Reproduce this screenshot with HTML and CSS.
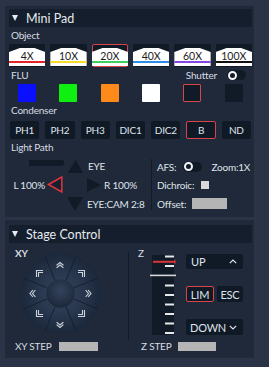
FILE: index.html
```html
<!DOCTYPE html>
<html>
<head>
<meta charset="utf-8">
<link rel="stylesheet" href="styles.css">
</head>
<body>
<div class="page">
  <section class="panel minipad">
    <div class="hdr"><span class="tri"></span><span>Mini Pad</span></div>
    <div class="lbl">Object</div>
    <div class="row6 objs">
      <div class="obj"><div class="lens"><span class="mag">4X</span><i class="bar c-red"></i></div></div>
      <div class="obj"><div class="lens"><span class="mag">10X</span><i class="bar c-yellow"></i></div></div>
      <div class="obj sel"><div class="lens"><span class="mag">20X</span><i class="bar c-green"></i></div></div>
      <div class="obj"><div class="lens"><span class="mag">40X</span><i class="bar c-blue"></i></div></div>
      <div class="obj"><div class="lens"><span class="mag">60X</span><i class="bar c-purple"></i></div></div>
      <div class="obj"><div class="lens"><span class="mag">100X</span><i class="bar c-black"></i></div></div>
    </div>
    <div class="lbl flurow"><span>FLU</span><span class="shutter">Shutter<span class="tog"><span class="knob"></span></span></span></div>
    <div class="row6 flus">
      <div class="cell"><div class="sq sq-blue"></div></div>
      <div class="cell"><div class="sq sq-green"></div></div>
      <div class="cell"><div class="sq sq-orange"></div></div>
      <div class="cell"><div class="sq sq-white"></div></div>
      <div class="cell"><div class="sq sq-dark sq-sel"></div></div>
      <div class="cell"><div class="sq sq-dark"></div></div>
    </div>
    <div class="lbl">Condenser</div>
    <div class="row7 cond">
      <div class="btn">PH1</div>
      <div class="btn">PH2</div>
      <div class="btn">PH3</div>
      <div class="btn">DIC1</div>
      <div class="btn">DIC2</div>
      <div class="btn sel">B</div>
      <div class="btn">ND</div>
    </div>
    <div class="lbl">Light Path</div>
    <div class="lp">
      <div class="lpgrid">
        <div class="slot"></div>
        <svg class="ar ar-up" width="15" height="13" viewBox="0 0 15 13"><polygon points="7.5,0 15,13 0,13" fill="#111a27"/></svg>
        <div class="eye">EYE</div>
        <div class="ltxt">L 100%</div>
        <svg class="ar ar-left" width="16" height="17" viewBox="0 0 16 17"><polygon points="1.5,8.5 14.8,1 14.8,16" fill="#162031" stroke="#e0353d" stroke-width="1.5" stroke-linejoin="miter"/></svg>
        <svg class="ar ar-right" width="14" height="14" viewBox="0 0 14 14"><polygon points="14,7 0,0 0,14" fill="#111a27"/></svg>
        <div class="rtxt">R 100%</div>
        <svg class="ar ar-down" width="16" height="14" viewBox="0 0 16 14"><polygon points="8,14 16,0 0,0" fill="#111a27"/></svg>
        <div class="cam">EYE:CAM 2:8</div>
      </div>
      <div class="vdiv"></div>
      <div class="lpright">
        <div class="lprow"><span>AFS:</span><span class="tog afs"><span class="knob"></span></span><span class="zoom">Zoom:1X</span></div>
        <div class="lprow"><span>Dichroic:</span><span class="chk"></span></div>
        <div class="lprow"><span>Offset:</span><span class="field off"></span></div>
      </div>
    </div>
  </section>

  <section class="panel stage">
    <div class="hdr"><span class="tri"></span><span>Stage Control</span></div>
    <div class="sbody">
      <div class="xycol">
        <div class="slbl">XY</div>
        <svg class="joy" width="81" height="81" viewBox="0 0 81 81">
          <defs>
            <radialGradient id="gOuter" cx="50%" cy="50%" r="50%">
              <stop offset="0" stop-color="#34455f"/>
              <stop offset="0.55" stop-color="#28374e"/>
              <stop offset="1" stop-color="#1b273a"/>
            </radialGradient>
            <radialGradient id="gInner" cx="50%" cy="40%" r="60%">
              <stop offset="0" stop-color="#34445d"/>
              <stop offset="1" stop-color="#1c2739"/>
            </radialGradient>
          </defs>
          <circle cx="40.5" cy="40.5" r="40.5" fill="url(#gOuter)"/>
          <g stroke="#141d2b" stroke-width="0.9">
            <line x1="53.43" y1="45.86" x2="77.46" y2="55.81"/>
            <line x1="45.86" y1="53.43" x2="55.81" y2="77.46"/>
            <line x1="35.14" y1="53.43" x2="25.19" y2="77.46"/>
            <line x1="27.57" y1="45.86" x2="3.54" y2="55.81"/>
            <line x1="27.57" y1="35.14" x2="3.54" y2="25.19"/>
            <line x1="35.14" y1="27.57" x2="25.19" y2="3.54"/>
            <line x1="45.86" y1="27.57" x2="55.81" y2="3.54"/>
            <line x1="53.43" y1="35.14" x2="77.46" y2="25.19"/>
          </g>
          <circle cx="40.5" cy="40.5" r="14.2" fill="url(#gInner)"/>
          <g fill="none" stroke="#cdd2da" stroke-width="1.1" stroke-linecap="square">
            <path d="M37 12 L40 9.5 L43 12 M37 14.5 L40 12 L43 14.5"/>
            <path d="M37 69.5 L40 72 L43 69.5 M37 72 L40 74.5 L43 72"/>
            <path d="M12.5 37.5 L10 40.5 L12.5 43.5 M15 37.5 L12.5 40.5 L15 43.5"/>
            <path d="M66 37.5 L68.5 40.5 L66 43.5 M68.5 37.5 L71 40.5 L68.5 43.5"/>
            <path d="M16.5 23.5 V17.5 H22.5 M18.5 23.5 V19.5 H22.5"/>
            <path d="M64.5 23.5 V17.5 H58.5 M62.5 23.5 V19.5 H58.5"/>
            <path d="M16.5 57.5 V63.5 H22.5 M18.5 57.5 V61.5 H22.5"/>
            <path d="M64.5 57.5 V63.5 H58.5 M62.5 57.5 V61.5 H58.5"/>
          </g>
        </svg>
      </div>
      <div class="sdiv"></div>
      <div class="zcol">
        <div class="slbl zl">Z</div>
        <svg class="zslider" width="26" height="80" viewBox="0 0 26 80">
          <rect x="2" y="0" width="22" height="80" fill="#111a27"/>
          <g fill="#e6e8ec">
            <rect x="15" y="0.5" width="9" height="2"/>
            <rect x="15" y="10" width="9" height="2"/>
            <rect x="15" y="29.5" width="9" height="2"/>
            <rect x="15" y="39" width="9" height="2"/>
            <rect x="15" y="48.5" width="9" height="2"/>
            <rect x="15" y="58" width="9" height="2"/>
            <rect x="15" y="67.5" width="9" height="2"/>
            <rect x="15" y="77" width="9" height="2"/>
          </g>
          <rect x="0" y="19.6" width="26" height="1.6" fill="#d4d6da"/>
          <rect x="3" y="5.8" width="20" height="2" fill="#d9343c"/>
          <polygon points="22,6.8 25.5,4.6 25.5,9" fill="#d9343c"/>
        </svg>
        <div class="zbtns">
          <div class="dd"><span>UP</span><svg width="8" height="5" viewBox="0 0 8 5"><path d="M0.8 4.2 L4 1 L7.2 4.2" fill="none" stroke="#dfe3ea" stroke-width="1.2"/></svg></div>
          <div class="zmid"><div class="btn lim">LIM</div><div class="btn esc">ESC</div></div>
          <div class="dd down"><span>DOWN</span><svg width="8" height="5" viewBox="0 0 8 5"><path d="M0.8 0.8 L4 4 L7.2 0.8" fill="none" stroke="#dfe3ea" stroke-width="1.2"/></svg></div>
        </div>
      </div>
    </div>
    <div class="steprow">
      <div class="step xys"><span>XY STEP</span><span class="field xyf"></span></div>
      <div class="step zs"><span>Z STEP</span><span class="field zf"></span></div>
    </div>
  </section>
</div>
</body>
</html>
```
FILE: styles.css
```css
* { box-sizing: border-box; margin: 0; padding: 0; }
html, body { background: #2b3446; }
body {
  width: 269px; height: 367px; overflow: hidden;
  font-family: Lato, "Noto Sans", sans-serif; font-size: 10px; letter-spacing: -0.2px; color: #dfe3ea;
}
.page { display: flex; flex-direction: column; gap: 3px; padding: 6px 15px 0 5px; }
.panel { background: #1f2939; padding: 3px 2px 1px 4px; }
.minipad { height: 211px; }
.stage { height: 138px; padding-top: 5px; }

.hdr {
  height: 18px; background: #141e2c; display: flex; align-items: center;
  padding-left: 3px; gap: 8px; font-size: 12.5px; letter-spacing: 0; color: #e6e9ee;
}
.tri { width: 0; height: 0; border-left: 3.5px solid transparent; border-right: 3.5px solid transparent; border-top: 6px solid #e6e9ee; }

.lbl { height: 14px; line-height: 14px; padding-left: 2px; margin-top: 1px; color: #d7dbe2; }

.row6 { display: grid; grid-template-columns: repeat(6, 1fr); column-gap: 5px; }
.objs { margin-top: 2px; }
.obj { height: 23px; background: #101926; border-radius: 2px; padding: 4px 0 1px; display: flex; flex-direction: column; }
.obj.sel { outline: 1px solid #d9434a; outline-offset: -1px; }
.lens {
  height: 18px; background: #fff; padding-top: 3px;
  clip-path: polygon(0 4px, 30% 0, 70% 0, 100% 4px, 100% 100%, 0 100%);
  display: flex; flex-direction: column; align-items: stretch;
}
.mag { height: 10px; line-height: 10px; text-align: center; color: #1c1c1c; font-size: 10.5px; letter-spacing: 0; }
.bar { display: block; height: 2px; }
.c-red { background: #e0262b; }
.c-yellow { background: #f3dc2a; }
.c-green { background: #3fcf5c; }
.c-blue { background: #2a8ee2; }
.c-purple { background: #8448e0; }
.c-black { background: #111; }

.flurow { display: flex; justify-content: space-between; align-items: center; padding-right: 6px; }
.shutter { display: flex; align-items: center; gap: 10px; }
.tog { width: 19px; height: 10px; border-radius: 5px; background: #111a27; display: flex; align-items: center; padding-left: 1px; }
.knob { width: 9px; height: 9px; border-radius: 50%; border: 2.2px solid #f4f5f7; background: #111a27; }

.flus { margin-top: 2px; }
.cell { display: flex; justify-content: center; }
.sq { width: 18px; height: 18px; border-radius: 1px; }
.sq-blue { background: #0a10ff; }
.sq-green { background: #10f010; }
.sq-orange { background: #ff8a1c; }
.sq-white { background: #ffffff; }
.sq-dark { background: #111a27; }
.sq-sel { border: 1px solid #d9434a; }

.row7 { display: grid; grid-template-columns: repeat(7, 1fr); column-gap: 6px; margin: 4px 1px 0; }
.btn { height: 18px; background: #101926; border-radius: 2px; display: flex; align-items: center; justify-content: center; color: #dfe3ea; }
.btn.sel { border: 1px solid #d9434a; }

.lp { display: flex; margin-top: 4px; }
.lpgrid {
  width: 142px; display: grid;
  grid-template-columns: 38px 18px 20px 18px 1fr;
  grid-template-rows: 17px 19px 19px; align-items: center;
}
.slot { grid-column: 1 / 3; grid-row: 1; align-self: start; justify-self: end; width: 35px; height: 6px; margin: 2px 1px 0 0; background: #111a27; border-radius: 0 0 3px 0; }
.ar-up { grid-column: 3; grid-row: 1; margin-left: 3px; }
.eye { grid-column: 4 / 6; grid-row: 1; padding-left: 3px; margin-top: -2px; }
.ltxt { grid-column: 1; grid-row: 2; justify-self: end; margin-right: 2px; }
.ar-left { grid-column: 2; grid-row: 2; margin-left: 0; }
.ar-right { grid-column: 4; grid-row: 2; margin-left: 2px; }
.rtxt { grid-column: 5; grid-row: 2; padding-left: 1px; }
.ar-down { grid-column: 3; grid-row: 3; margin-left: 2px; }
.cam { grid-column: 4 / 6; grid-row: 3; padding-left: 2px; white-space: nowrap; }

.vdiv { width: 1px; background: #111a27; margin: 1px 0 3px; }
.lpright { display: grid; grid-template-rows: 17px 19px 19px; padding-left: 5px; }
.lprow { display: flex; align-items: center; }
.tog.afs { margin-left: 7px; }
.zoom { margin-left: 9px; }
.chk { width: 8px; height: 8px; background: #d9d9d9; margin-left: 7px; }
.field { display: block; background: #b5b5b5; }
.off { width: 35px; height: 11px; margin-left: 6px; }

.sbody { display: flex; height: 96px; margin-top: 1px; }
.xycol { width: 119px; display: flex; flex-direction: column; }
.slbl { height: 14px; line-height: 14px; margin-top: 2px; padding-left: 6px; font-weight: 700; color: #d7dbe2; }
.joy { display: block; margin: -7px 0 0 11px; }
.sdiv { width: 1px; height: 88px; margin-top: 8px; background: #111a27; }
.zcol { display: flex; padding-left: 9px; }
.zl { padding-left: 0; width: 6px; font-weight: 400; }
.zslider { display: block; margin: 11px 0 0 6px; }
.zbtns { width: 57px; margin: 10px 0 0 10px; display: flex; flex-direction: column; }
.dd { height: 15px; background: #101926; border-radius: 2px; display: flex; align-items: center; justify-content: space-between; padding: 0 6px 0 5px; font-size: 11px; }
.dd.down { height: 16px; margin-top: 17px; padding-left: 4px; }
.zmid { display: flex; gap: 3px; margin-top: 17px; }
.zmid .btn { height: 16px; font-size: 11px; }
.lim { width: 28px; border: 1px solid #d9434a; }
.esc { width: 26px; }

.steprow { display: flex; height: 12px; align-items: center; }
.step { display: flex; align-items: center; color: #d7dbe2; }
.xys { width: 120px; padding-left: 6px; }
.zs { padding-left: 12px; }
.xyf { width: 39px; height: 9px; margin-left: 7px; }
.zf { width: 38px; height: 9px; margin-left: 6px; }
```
